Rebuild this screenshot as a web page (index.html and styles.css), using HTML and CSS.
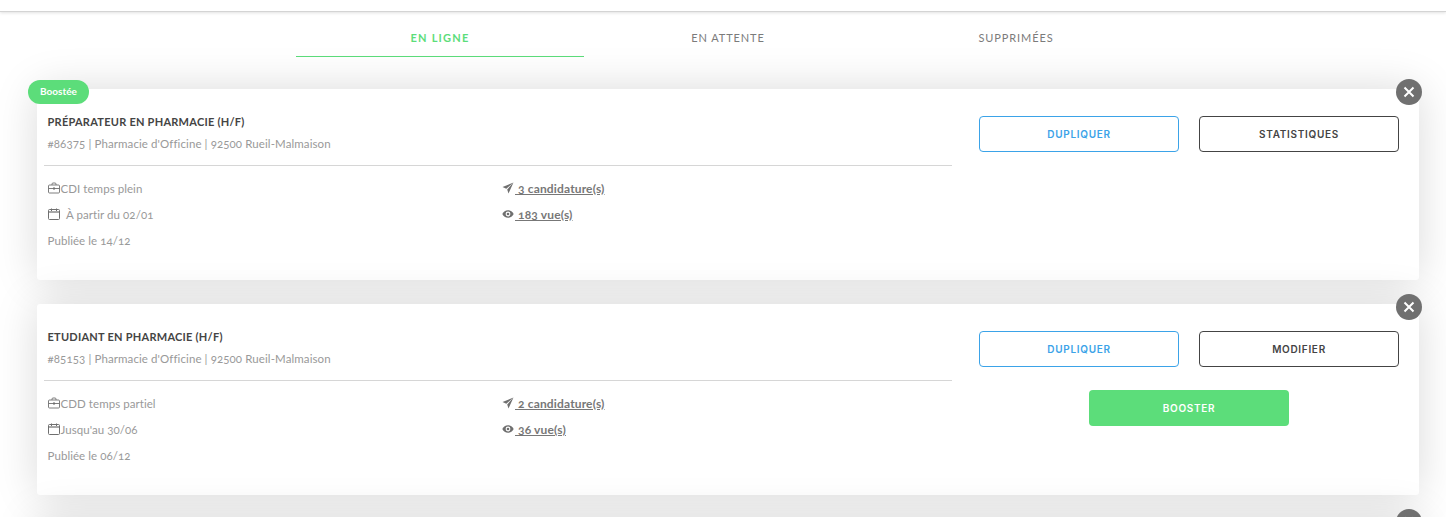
FILE: index.html
```html
<!DOCTYPE html>
<html lang="fr">
<head>
<meta charset="utf-8">
<title>Offres</title>
<link rel="stylesheet" href="styles.css">
</head>
<body>
<svg class="defs" width="0" height="0" aria-hidden="true">
  <symbol id="i-case" viewBox="0 0 12 12"><path d="M1.500 3h9a1 1 0 0 1 1 1v6a1 1 0 0 1-1 1h-9a1 1 0 0 1-1-1V4a1 1 0 0 1 1-1zM4 3V2a1 1 0 0 1 1-1h2a1 1 0 0 1 1 1v1M.5 6.500h11" fill="none" stroke="currentColor" stroke-width=".9"/><rect x="5" y="5.500" width="2" height="2" fill="currentColor"/></symbol>
  <symbol id="i-cal" viewBox="0 0 12 12"><rect x=".5" y="1.500" width="11" height="10" rx="1" fill="none" stroke="currentColor"/><path d="M.5 4h11" stroke="currentColor" stroke-width="1.200" fill="none"/><path d="M3.500.5v2.500M8.500.5v2.500" stroke="currentColor" fill="none"/></symbol>
  <symbol id="i-send" viewBox="0 0 12 12"><path d="M11.500.5L.5 5l3.800 1.700L11.500.5 5.200 7.500l1.300 4z" fill="currentColor"/></symbol>
  <symbol id="i-eye" viewBox="0 0 12 12"><path d="M6 2.200C3.500 2.200 1.400 3.800.3 6c1.100 2.200 3.200 3.800 5.700 3.800S10.600 8.200 11.700 6C10.600 3.800 8.500 2.200 6 2.200z" fill="currentColor"/><circle cx="6" cy="6" r="2.400" fill="#fff"/><circle cx="6" cy="6" r="1.300" fill="currentColor"/></symbol>
</svg>
<header class="topbar">
  <span class="top-btn top-blue"></span>
  <span class="top-btn top-green"></span>
</header>
<nav class="tabs">
  <a class="tab active">EN LIGNE</a>
  <a class="tab">EN ATTENTE</a>
  <a class="tab">SUPPRIMÉES</a>
</nav>
<main class="list">
  <article class="card">
    <span class="badge">Boostée</span>
    <button class="close" aria-label="Fermer"><svg viewBox="0 0 12 12"><path d="M1.500 1.500l9 9M10.500 1.500l-9 9"/></svg></button>
    <div class="info">
      <div class="head">
        <h2>PRÉPARATEUR EN PHARMACIE (H/F)</h2>
        <p>#86375 | Pharmacie d'Officine | 92500 Rueil-Malmaison</p>
      </div>
      <div class="meta">
        <div class="col">
          <div class="row"><svg class="ico"><use href="#i-case"/></svg>CDI temps plein</div>
          <div class="row"><svg class="ico"><use href="#i-cal"/></svg>&nbsp; À partir du 02/01</div>
          <div class="row">Publiée le 14/12</div>
        </div>
        <div class="col">
          <div class="row"><svg class="ico"><use href="#i-send"/></svg><a class="lnk">&nbsp;3 candidature(s)</a></div>
          <div class="row"><svg class="ico"><use href="#i-eye"/></svg><a class="lnk">&nbsp;183 vue(s)</a></div>
        </div>
      </div>
    </div>
    <div class="actions">
      <a class="btn blue">DUPLIQUER</a>
      <a class="btn dark">STATISTIQUES</a>
    </div>
  </article>
  <article class="card">
    <button class="close" aria-label="Fermer"><svg viewBox="0 0 12 12"><path d="M1.500 1.500l9 9M10.500 1.500l-9 9"/></svg></button>
    <div class="info">
      <div class="head">
        <h2>ETUDIANT EN PHARMACIE (H/F)</h2>
        <p>#85153 | Pharmacie d'Officine | 92500 Rueil-Malmaison</p>
      </div>
      <div class="meta">
        <div class="col">
          <div class="row"><svg class="ico"><use href="#i-case"/></svg>CDD temps partiel</div>
          <div class="row"><svg class="ico"><use href="#i-cal"/></svg>Jusqu'au 30/06</div>
          <div class="row">Publiée le 06/12</div>
        </div>
        <div class="col">
          <div class="row"><svg class="ico"><use href="#i-send"/></svg><a class="lnk">&nbsp;2 candidature(s)</a></div>
          <div class="row"><svg class="ico"><use href="#i-eye"/></svg><a class="lnk">&nbsp;36 vue(s)</a></div>
        </div>
      </div>
    </div>
    <div class="actions">
      <a class="btn blue">DUPLIQUER</a>
      <a class="btn dark">MODIFIER</a>
      <a class="btn green">BOOSTER</a>
    </div>
  </article>
  <article class="card">
    <button class="close" aria-label="Fermer"><svg viewBox="0 0 12 12"><path d="M1.500 1.500l9 9M10.500 1.500l-9 9"/></svg></button>
  </article>
</main>
</body>
</html>
```
FILE: styles.css
```css
* { box-sizing: border-box; }
html, body { margin: 0; height: 517px; overflow: hidden; background: #fff; }
body { font-family: "Lato", "Open Sans", sans-serif; color: #999; font-variant-numeric: oldstyle-nums; }
.defs { position: absolute; }
.topbar {
  height: 12px; background: #fff; border-bottom: 1px solid #d4d4d4;
  box-shadow: 0 1px 3px rgba(0,0,0,.12);
  display: flex; justify-content: flex-end; align-items: flex-end; gap: 14px;
  position: relative; z-index: 5;
}
.top-btn { height: 1px; margin-bottom: 11px; }
.top-blue { width: 110px; background: #3ba3e8; }
.top-green { width: 59px; background: #5cdd7a; }
.tabs { display: flex; margin: 0 0 0 296px; width: 864px; height: 45px; }
.tab {
  flex: 1; display: flex; align-items: center; justify-content: center;
  height: 45px; padding-top: 11px; padding-bottom: 5px;
  font: 400 11px "Lato", sans-serif; letter-spacing: .9px; color: #7b7b7b;
}
.tab.active { color: #5cdd7a; font-weight: 700; letter-spacing: 1.200px; border-bottom: 1px solid #5cdd7a; }
.list { padding: 32px 27px 0 37px; display: flex; flex-direction: column; gap: 24px; }
.card {
  position: relative; height: 191px; background: #fff; border-radius: 3px;
  box-shadow: 0 0 44px rgba(0,0,0,.15);
  display: grid; grid-template-columns: 915px 1fr; flex: none;
}
.badge {
  position: absolute; left: -9px; top: -9px; width: 61px; height: 24px; border-radius: 12px;
  background: #5cdd7a; color: #fff;
  font: 700 10px/23px "Lato", sans-serif; text-align: center;
}
.close {
  position: absolute; right: -3px; top: -10px; width: 26px; height: 26px; padding: 7px;
  border: 0; border-radius: 50%; background: #707070;
}
.close svg { display: block; width: 12px; height: 12px; fill: none; stroke: #fff; stroke-width: 2; }
.info { padding-left: 7px; }
.head { height: 76.500px; border-bottom: 1px solid #d6d6d6; padding: 26px 0 0 3.500px; }
h2 { margin: 0; font: 700 11px/14px "Lato", sans-serif; color: #444; letter-spacing: .25px; }
p { margin: 8px 0 0; font-size: 11.500px; line-height: 14px; color: #999; letter-spacing: .1px; }
.meta { display: grid; grid-template-columns: 454.500px 1fr; padding: 10.500px 0 0 3.500px; }
.row { height: 26px; display: flex; align-items: center; padding-bottom: 1px; font-size: 11.500px; letter-spacing: .06px; white-space: pre; }
.ico { width: 12px; height: 12px; margin-right: 1px; color: #6f6f6f; flex: none; position: relative; top: -1px; }
.lnk { color: #777; font-weight: 700; text-decoration: underline; font-size: 12px; letter-spacing: .15px; }
.actions {
  padding: 27px 20px 0 27px;
  display: grid; grid-template-columns: 200px 200px; column-gap: 20px;
  grid-auto-rows: 36px; row-gap: 23px; justify-content: start;
}
.btn {
  display: flex; align-items: center; justify-content: center; height: 36px; border-radius: 4px;
  font: 600 10px "Inter", sans-serif; letter-spacing: .7px;
}
.blue { border: 1px solid #3ba3e8; color: #3ba3e8; }
.dark { border: 1px solid #444; color: #444; }
.green { grid-column: 1 / 3; justify-self: center; width: 200px; padding-bottom: 1px; background: #5cdd7a; color: #fff; }
```
